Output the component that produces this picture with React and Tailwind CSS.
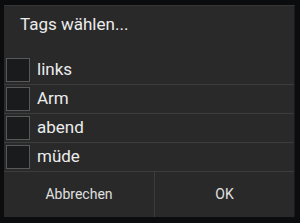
const tags = ['links', 'Arm', 'abend', 'müde'];

const App = () => {
    return (
        <div className="w-[300px] h-[223px] bg-[#0b0c0e] pt-[5px] pl-[4px]" style={{ fontFamily: 'Roboto, "Noto Sans", sans-serif' }}>
            {/* Dialog */}
            <div className="w-[291px] h-[212px] bg-[#292929] border-t border-[#353535] border-r border-r-[#1a1a1a] flex flex-col">
                <div className="h-[50px] flex items-center pl-[16px] pb-[12px] text-[17px] text-[#ececec]">Tags wählen...</div>

                <div className="flex flex-col">
                    {tags.map((tag) => (
                        <div key={tag} className="h-[29px] flex items-center border-b border-[#3c3c3c]">
                            <div className="ml-[2px] w-[24px] h-[24px] bg-[#1a1b1d] border border-[#585858]" />
                            <span className="ml-[7px] text-[17px] text-[#ececec]">{tag}</span>
                        </div>
                    ))}
                </div>

                <div className="flex-1 flex">
                    <button className="w-[151px] border-r border-[#3c3c3c] text-[14px] text-[#e0e0e0]">Abbrechen</button>
                    <button className="flex-1 text-[14px] text-[#e0e0e0]">OK</button>
                </div>
            </div>
        </div>
    );
};

export default App;
